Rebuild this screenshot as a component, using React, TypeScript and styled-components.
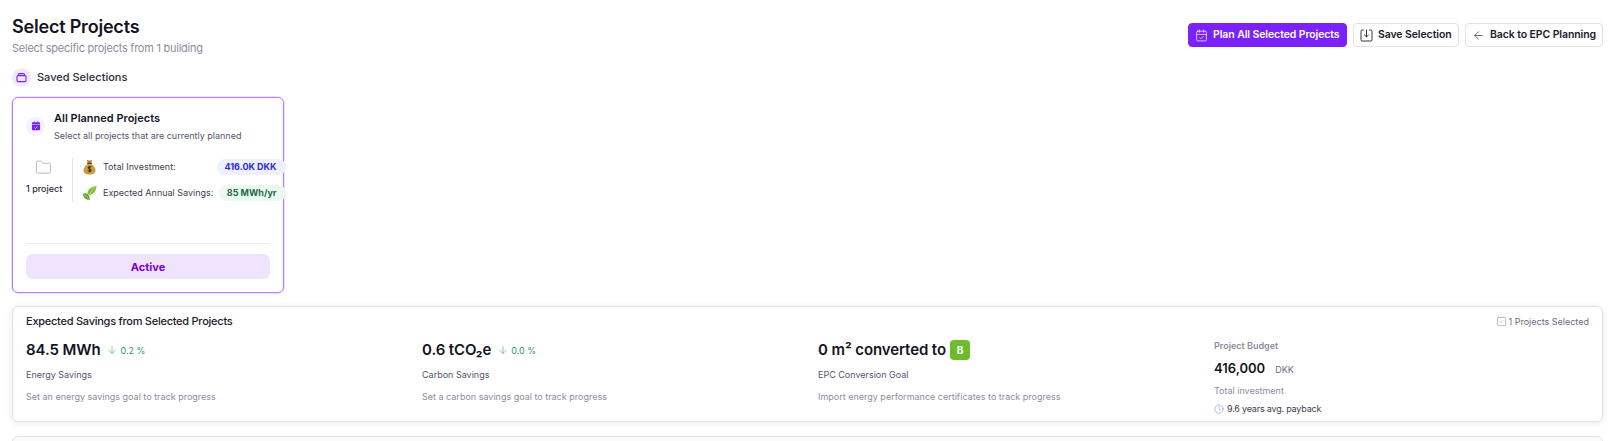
import React from "react";
import styled, { createGlobalStyle } from "styled-components";
import { CalendarCheck, Folder, ArrowDown, ArrowLeft, Clock, SquareCheck } from "lucide-react";

const Global = createGlobalStyle`
  html, body { margin: 0; padding: 0; background: #fff; height: 441px; overflow: hidden; }
  body { font-family: Inter, "Liberation Sans", sans-serif; color: #14141f; -webkit-font-smoothing: antialiased; }
  * { box-sizing: border-box; }
`;

const Page = styled.div`
  padding: 14px 10px 0 12px;
  display: flex;
  flex-direction: column;
`;
const Header = styled.header`
  display: flex;
  justify-content: space-between;
  align-items: flex-start;
`;
const Title = styled.h1`
  margin: 0;
  font-size: 18px;
  line-height: 25px;
  font-weight: 600;
  letter-spacing: -0.2px;
  color: #14141f;
`;
const Sub = styled.p`
  margin: 1px 0 0;
  font-size: 11px;
  line-height: 16px;
  letter-spacing: -0.25px;
  color: #8d8d9e;
`;
const Actions = styled.div`
  display: flex;
  gap: 6.5px;
  padding-top: 9px;
`;
const Btn = styled.button<{ $primary?: boolean }>`
  height: 24px;
  display: inline-flex;
  align-items: center;
  gap: 5px;
  padding: 0 6px;
  font: 600 10.5px/16px Inter, sans-serif;
  letter-spacing: -0.1px;
  border-radius: 4px;
  border: 1px solid ${(p) => (p.$primary ? "#7b22fa" : "#e2e2e8")};
  background: ${(p) => (p.$primary ? "#7b22fa" : "#fff")};
  color: ${(p) => (p.$primary ? "#fff" : "#20202c")};
`;
const SectionHead = styled.div`
  display: flex;
  align-items: center;
  gap: 6px;
  margin-top: 11px;
  height: 20px;
  font-size: 11px;
  font-weight: 500;
  color: #2c2c3a;
`;
const IconDot = styled.span<{ $pale?: boolean }>`
  width: 19px;
  height: 19px;
  flex: none;
  border-radius: 50%;
  background: ${(p) => (p.$pale ? "#f6f1fe" : "#f1e9fe")};
  color: #7b22fa;
  display: inline-flex;
  align-items: center;
  justify-content: center;
`;
const SelCard = styled.section`
  margin-top: 10px;
  width: 272px;
  height: 196px;
  border: 1px solid #b57bf8;
  border-radius: 6px;
  box-shadow: 0 0 0 1px #efe4fe, 0 1px 3px rgba(30, 30, 60, 0.08);
  padding: 12px 13px 13px;
  display: flex;
  flex-direction: column;
`;
const CardTop = styled.div`
  display: flex;
  align-items: center;
  gap: 9px;
`;
const CardTitle = styled.div`
  font-size: 11px;
  line-height: 16px;
  font-weight: 600;
  color: #14141f;
`;
const CardSub = styled.div`
  margin-top: 3px;
  font-size: 9px;
  line-height: 13px;
  color: #55556a;
`;
const Stats = styled.div`
  display: flex;
  margin-top: 15px;
  height: 45px;
  width: 260px;
`;
const ProjectCol = styled.div`
  width: 47px;
  border-right: 1px solid #e5e5ea;
  margin-right: 9px;
  flex: none;
  display: flex;
  flex-direction: column;
  align-items: flex-start;
  font-size: 9px;
  font-weight: 500;
  color: #2c2c3a;
  line-height: 12px;
`;
const FolderWrap = styled.span`
  margin: 2px 0 7px 9px;
  height: 17px;
  color: #9c9cab;
`;
const Metrics = styled.div`
  flex: 1;
  display: flex;
  flex-direction: column;
  gap: 9px;
  margin-top: 1px;
`;
const Metric = styled.div`
  display: flex;
  align-items: center;
  height: 17px;
  font-size: 9px;
  color: #3e3e4e;
`;
const MetricLabel = styled.span`
  margin-left: 6px;
  flex: 1;
  white-space: nowrap;
`;
const Pill = styled.span<{ $tone: "blue" | "green" }>`
  height: 16px;
  padding: 0 9.5px 0 7.5px;
  border-radius: 8px;
  font-size: 9px;
  line-height: 16px;
  font-weight: 700;
  white-space: nowrap;
  background: ${(p) => (p.$tone === "blue" ? "#eef0fe" : "#ebf9f1")};
  color: ${(p) => (p.$tone === "blue" ? "#2f2fd8" : "#1d6b47")};
`;
const CardFoot = styled.div`
  margin-top: auto;
  border-top: 1px solid #ececf0;
  padding-top: 10px;
  height: 36px;
  width: 244px;
`;
const ActiveBtn = styled.div`
  height: 25px;
  border-radius: 6px;
  background: #f0e4fc;
  color: #7300d6;
  font-size: 11px;
  font-weight: 700;
  display: flex;
  align-items: center;
  justify-content: center;
`;
const Summary = styled.section`
  margin-top: 13px;
  height: 116px;
  border: 1px solid #e3e3e8;
  border-radius: 6px;
  box-shadow: 0 1px 6px rgba(30, 30, 60, 0.1);
  padding: 6px 13px;
`;
const SumHead = styled.div`
  display: flex;
  justify-content: space-between;
  align-items: center;
  height: 16px;
`;
const SumTitle = styled.div`
  font-size: 11px;
  font-weight: 500;
  letter-spacing: -0.25px;
  color: #20202c;
`;
const Selected = styled.div`
  display: flex;
  align-items: center;
  gap: 2px;
  font-size: 9px;
  color: #6a6a7c;
`;
const SumGrid = styled.div`
  display: grid;
  grid-template-columns: 396px 396px 396px 1fr;
  margin-top: 10px;
`;
const BigLine = styled.div`
  display: flex;
  align-items: center;
  height: 22px;
`;
const Big = styled.span`
  font-size: 15px;
  line-height: 22px;
  font-weight: 600;
  letter-spacing: -0.1px;
  color: #14141f;
  white-space: nowrap;
`;
const Delta = styled.span`
  display: inline-flex;
  align-items: center;
  margin-left: 6px;
  gap: 2px;
  font-size: 9px;
  color: #2a9d5e;
`;
const Label = styled.div`
  margin-top: 7px;
  font-size: 9px;
  line-height: 14px;
  color: #55556a;
`;
const Hint = styled.div`
  margin-top: 8px;
  font-size: 9px;
  line-height: 14px;
  color: #8d8d9e;
`;
const Grade = styled.span`
  width: 20px;
  height: 20px;
  margin-left: 4px;
  border-radius: 4px;
  background: #6cbc2b;
  color: #fff;
  font-size: 10px;
  font-weight: 700;
  display: inline-flex;
  align-items: center;
  justify-content: center;
`;
const BudgetCol = styled.div`
  margin-top: 1px;
`;
const BudgetHead = styled.div`
  font-size: 9px;
  line-height: 12px;
  font-weight: 600;
  color: #8d8d9e;
`;
const BudgetLine = styled.div`
  display: flex;
  align-items: baseline;
  gap: 10px;
  margin-top: 6px;
  font-size: 13px;
  line-height: 20px;
  font-weight: 600;
`;
const Currency = styled.span`
  font-size: 9px;
  font-weight: 400;
  color: #6a6a7c;
`;
const BudgetNote = styled.div`
  margin-top: 4px;
  font-size: 9px;
  line-height: 14px;
  color: #8d8d9e;
`;
const Payback = styled.div`
  margin-top: 4px;
  display: flex;
  align-items: center;
  gap: 3px;
  font-size: 9px;
  line-height: 14px;
  letter-spacing: -0.2px;
  color: #3e3e4e;
`;
const NextCard = styled.section`
  margin-top: 14px;
  height: 40px;
  border: 1px solid #e3e3e8;
  border-radius: 6px;
  background: #fbfbfc;
`;

const MoneyBag = () => (
  <svg width="15" height="16" viewBox="0 0 14 15" aria-hidden="true">
    <path d="M4.4 .8 C5.6 1.6 8.4 1.6 9.6 .8 L8.7 3.6 H5.3 Z" fill="#b98a2e" />
    <rect x="4.8" y="3.3" width="4.4" height="1.4" rx=".5" fill="#5d4720" />
    <path d="M5.2 4.6 C2.6 6.4 1.4 8.6 1.4 10.8 C1.4 13.4 3.6 14.6 7 14.6 C10.4 14.6 12.6 13.4 12.6 10.8 C12.6 8.6 11.4 6.4 8.8 4.6 Z" fill="#c99c3f" />
    <path d="M8.6 7.6 C8.2 7 6 6.9 5.8 8.1 C5.6 9.5 8.6 9.1 8.4 10.6 C8.2 11.8 6 11.6 5.4 11 M7 6.5 V12.4" stroke="#3f3216" strokeWidth="1" fill="none" />
  </svg>
);
const Leaves = () => (
  <svg width="15" height="16" viewBox="0.5 0 14 15" aria-hidden="true">
    <path d="M1 8.5 C4 6.5 7.5 8 8 13.5 C4.5 14.5 2 12.5 1 8.5 Z" fill="#5da52e" />
    <path d="M5.5 7.5 C6 3.5 10 2 14 .8 C14 5 12 8.5 7.5 9.6 Z" fill="#7fbf3a" />
    <path d="M2 9 C4 10 6 11.5 7.5 13.2 M7 9 C9 6.5 11 4 13.4 1.4" stroke="#e5f3cf" strokeWidth=".5" fill="none" />
  </svg>
);
const TrayIcon = () => (
  <svg width="11" height="11" viewBox="0 0 11 11" fill="none" stroke="currentColor" strokeWidth="1.1" aria-hidden="true">
    <rect x="1" y="3.6" width="9" height="6" rx="1" />
    <path d="M2.6 3.4 V2.4 A.8.8 0 0 1 3.4 1.6 H7.6 A.8.8 0 0 1 8.4 2.4 V3.4" />
  </svg>
);
const FilledCalendar = () => (
  <svg width="10" height="10" viewBox="0 0 11 11" aria-hidden="true">
    <path d="M2.4 1.4 A1.2 1.2 0 0 0 1 2.6 V3.8 H10 V2.6 A1.2 1.2 0 0 0 8.6 1.4 Z" fill="#7b22fa" />
    <rect x="3" y=".4" width="1" height="1.6" fill="#7b22fa" />
    <rect x="7" y=".4" width="1" height="1.6" fill="#7b22fa" />
    <path d="M1 4.4 H10 V9 A1.2 1.2 0 0 1 8.8 10.2 H2.2 A1.2 1.2 0 0 1 1 9 Z" fill="#7b22fa" />
    <path d="M4 7.2 L5.1 8.2 L7.1 6" stroke="#fff" strokeWidth=".8" fill="none" />
  </svg>
);
const SaveIcon = () => (
  <svg width="13" height="13" viewBox="0 0 13 13" fill="none" stroke="currentColor" strokeWidth=".9" aria-hidden="true">
    <path d="M4 1 H2.2 A1.2 1.2 0 0 0 1 2.2 V10.8 A1.2 1.2 0 0 0 2.2 12 H10.8 A1.2 1.2 0 0 0 12 10.8 V2.2 A1.2 1.2 0 0 0 10.8 1 H9" />
    <path d="M6.5 .6 V7.8 M4.2 5.6 L6.5 7.9 L8.8 5.6" />
  </svg>
);

export default function App() {
  return (
    <>
      <Global />
      <Page>
        <Header>
          <div>
            <Title>Select Projects</Title>
            <Sub>Select specific projects from 1 building</Sub>
          </div>
          <Actions>
            <Btn $primary><CalendarCheck size={13} strokeWidth={1.3} />Plan All Selected Projects</Btn>
            <Btn><SaveIcon />Save Selection</Btn>
            <Btn><ArrowLeft size={13} strokeWidth={1.2} />Back to EPC Planning</Btn>
          </Actions>
        </Header>
        <SectionHead>
          <IconDot><TrayIcon /></IconDot>
          Saved Selections
        </SectionHead>
        <SelCard>
          <CardTop>
            <IconDot $pale><FilledCalendar /></IconDot>
            <div>
              <CardTitle>All Planned Projects</CardTitle>
              <CardSub>Select all projects that are currently planned</CardSub>
            </div>
          </CardTop>
          <Stats>
            <ProjectCol>
              <FolderWrap><Folder size={17} strokeWidth={1} /></FolderWrap>
              1 project
            </ProjectCol>
            <Metrics>
              <Metric><MoneyBag /><MetricLabel>Total Investment:</MetricLabel><Pill $tone="blue">416.0K DKK</Pill></Metric>
              <Metric><Leaves /><MetricLabel>Expected Annual Savings:</MetricLabel><Pill $tone="green">85 MWh/yr</Pill></Metric>
            </Metrics>
          </Stats>
          <CardFoot><ActiveBtn>Active</ActiveBtn></CardFoot>
        </SelCard>
        <Summary>
          <SumHead>
            <SumTitle>Expected Savings from Selected Projects</SumTitle>
            <Selected><SquareCheck size={11} strokeWidth={1} />1 Projects Selected</Selected>
          </SumHead>
          <SumGrid>
            <div>
              <BigLine><Big>84.5 MWh</Big><Delta><ArrowDown size={12} strokeWidth={1.1} />0.2 %</Delta></BigLine>
              <Label>Energy Savings</Label>
              <Hint>Set an energy savings goal to track progress</Hint>
            </div>
            <div>
              <BigLine><Big>0.6 tCO₂e</Big><Delta><ArrowDown size={12} strokeWidth={1.1} />0.0 %</Delta></BigLine>
              <Label>Carbon Savings</Label>
              <Hint>Set a carbon savings goal to track progress</Hint>
            </div>
            <div>
              <BigLine><Big>0 m² converted to</Big><Grade>B</Grade></BigLine>
              <Label>EPC Conversion Goal</Label>
              <Hint>Import energy performance certificates to track progress</Hint>
            </div>
            <BudgetCol>
              <BudgetHead>Project Budget</BudgetHead>
              <BudgetLine>416,000<Currency>DKK</Currency></BudgetLine>
              <BudgetNote>Total investment</BudgetNote>
              <Payback><Clock size={10} strokeWidth={1.2} color="#6f78ee" />9.6 years avg. payback</Payback>
            </BudgetCol>
          </SumGrid>
        </Summary>
        <NextCard />
      </Page>
    </>
  );
}
